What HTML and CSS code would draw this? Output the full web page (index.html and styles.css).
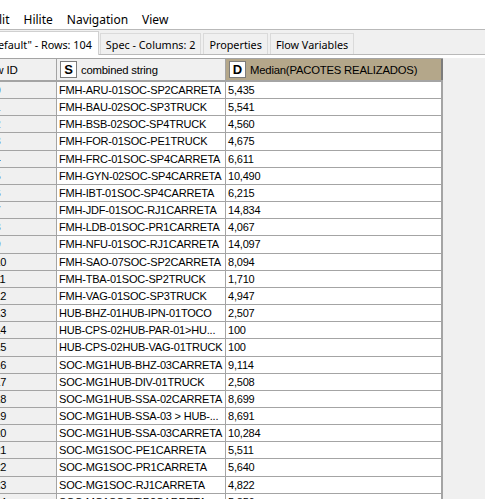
FILE: index.html
```html
<!DOCTYPE html>
<html>
<head>
<meta charset="utf-8">
<link rel="stylesheet" href="styles.css">
</head>
<body>
<div class="menubar">
  <span class="menu menu-cut">lit</span>
  <span class="menu">Hilite</span>
  <span class="menu">Navigation</span>
  <span class="menu">View</span>
</div>
<div class="tabstrip">
  <div class="tab active">efault" - Rows: 104</div>
  <div class="tab">Spec - Columns: 2</div>
  <div class="tab">Properties</div>
  <div class="tab">Flow Variables</div>
</div>
<div class="gap"></div>
<div class="tablearea">
  <div class="table">
    <div class="row head">
      <div class="cell id">Row ID</div>
      <div class="cell str"><span class="type">S</span>combined string</div>
      <div class="cell num sel"><span class="type">D</span>Median(PACOTES REALIZADOS)</div>
    </div>
    <div class="row"><div class="cell id">Row0</div><div class="cell str">FMH-ARU-01SOC-SP2CARRETA</div><div class="cell num">5,435</div></div>
    <div class="row"><div class="cell id">Row1</div><div class="cell str">FMH-BAU-02SOC-SP3TRUCK</div><div class="cell num">5,541</div></div>
    <div class="row"><div class="cell id">Row2</div><div class="cell str">FMH-BSB-02SOC-SP4TRUCK</div><div class="cell num">4,560</div></div>
    <div class="row"><div class="cell id">Row3</div><div class="cell str">FMH-FOR-01SOC-PE1TRUCK</div><div class="cell num">4,675</div></div>
    <div class="row"><div class="cell id">Row4</div><div class="cell str">FMH-FRC-01SOC-SP4CARRETA</div><div class="cell num">6,611</div></div>
    <div class="row"><div class="cell id">Row5</div><div class="cell str">FMH-GYN-02SOC-SP4CARRETA</div><div class="cell num">10,490</div></div>
    <div class="row"><div class="cell id">Row6</div><div class="cell str">FMH-IBT-01SOC-SP4CARRETA</div><div class="cell num">6,215</div></div>
    <div class="row"><div class="cell id">Row7</div><div class="cell str">FMH-JDF-01SOC-RJ1CARRETA</div><div class="cell num">14,834</div></div>
    <div class="row"><div class="cell id">Row8</div><div class="cell str">FMH-LDB-01SOC-PR1CARRETA</div><div class="cell num">4,067</div></div>
    <div class="row"><div class="cell id">Row9</div><div class="cell str">FMH-NFU-01SOC-RJ1CARRETA</div><div class="cell num">14,097</div></div>
    <div class="row"><div class="cell id">Row10</div><div class="cell str">FMH-SAO-07SOC-SP2CARRETA</div><div class="cell num">8,094</div></div>
    <div class="row"><div class="cell id">Row11</div><div class="cell str">FMH-TBA-01SOC-SP2TRUCK</div><div class="cell num">1,710</div></div>
    <div class="row"><div class="cell id">Row12</div><div class="cell str">FMH-VAG-01SOC-SP3TRUCK</div><div class="cell num">4,947</div></div>
    <div class="row"><div class="cell id">Row13</div><div class="cell str">HUB-BHZ-01HUB-IPN-01TOCO</div><div class="cell num">2,507</div></div>
    <div class="row"><div class="cell id">Row14</div><div class="cell str">HUB-CPS-02HUB-PAR-01&gt;HU...</div><div class="cell num">100</div></div>
    <div class="row"><div class="cell id">Row15</div><div class="cell str">HUB-CPS-02HUB-VAG-01TRUCK</div><div class="cell num">100</div></div>
    <div class="row"><div class="cell id">Row16</div><div class="cell str">SOC-MG1HUB-BHZ-03CARRETA</div><div class="cell num">9,114</div></div>
    <div class="row"><div class="cell id">Row17</div><div class="cell str">SOC-MG1HUB-DIV-01TRUCK</div><div class="cell num">2,508</div></div>
    <div class="row"><div class="cell id">Row18</div><div class="cell str">SOC-MG1HUB-SSA-02CARRETA</div><div class="cell num">8,699</div></div>
    <div class="row"><div class="cell id">Row19</div><div class="cell str">SOC-MG1HUB-SSA-03 &gt; HUB-...</div><div class="cell num">8,691</div></div>
    <div class="row"><div class="cell id">Row20</div><div class="cell str">SOC-MG1HUB-SSA-03CARRETA</div><div class="cell num">10,284</div></div>
    <div class="row"><div class="cell id">Row21</div><div class="cell str">SOC-MG1SOC-PE1CARRETA</div><div class="cell num">5,511</div></div>
    <div class="row"><div class="cell id">Row22</div><div class="cell str">SOC-MG1SOC-PR1CARRETA</div><div class="cell num">5,640</div></div>
    <div class="row"><div class="cell id">Row23</div><div class="cell str">SOC-MG1SOC-RJ1CARRETA</div><div class="cell num">4,822</div></div>
    <div class="row"><div class="cell id">Row24</div><div class="cell str">SOC-MG1SOC-SP2CARRETA</div><div class="cell num">5,856</div></div>
  </div>
  <div class="filler"></div>
</div>
</body>
</html>
```
FILE: styles.css
```css
html, body {
  margin: 0;
  padding: 0;
  background: #ffffff;
  overflow: hidden;
  height: 499px;
}
body {
  font-family: "Liberation Sans", Arial, sans-serif;
  color: #000;
}
.menubar {
  height: 30px;
  display: flex;
  align-items: center;
  font-family: "Noto Sans", sans-serif;
  font-size: 12px;
  border-bottom: 1px solid #b9b9b9;
  box-sizing: border-box;
  padding-top: 9px;
}
.menu {
  margin-left: 14px;
}
.menu-cut {
  margin-left: -1px;
}
.tabstrip {
  display: flex;
  height: 25px;
  background: #f0f0f0;
  border-bottom: 1px solid #b9b9b9;
  box-sizing: border-box;
  align-items: flex-end;
  font-family: "Noto Sans", sans-serif;
  font-size: 10.8px;
}
.tab {
  height: 21px;
  line-height: 21px;
  padding: 0 5px;
  box-sizing: border-box;
  border: 1px solid #dadada;
  border-bottom: none;
  margin-right: 2px;
  background: #f0f0f0;
}
.tab.active {
  height: 24px;
  line-height: 25px;
  background: #ffffff;
  border-color: #d0d0d0;
  margin-left: -8px;
  padding-left: 5px;
  padding-right: 6px;
  margin-right: 1px;
  position: relative;
  top: 1px;
}
.gap {
  height: 3px;
}
.tablearea {
  display: flex;
  height: 441px;
}
.table {
  margin-left: -30px;
  font-size: 11px;
  letter-spacing: -0.2px;
}
.row {
  display: flex;
  height: 17.17px;
  box-sizing: border-box;
  border-bottom: 1px solid #a4a4a4;
}
.cell {
  box-sizing: border-box;
  padding-left: 2px;
  line-height: 16px;
  white-space: nowrap;
  overflow: hidden;
  border-right: 1px solid #a4a4a4;
}
.cell.id {
  width: 87px;
  background: #f0f0f0;
  padding-left: 3px;
}
.cell.str {
  width: 169px;
}
.cell.num {
  width: 217px;
  border-right: 2px solid #a4a4a4;
}
.row.head {
  height: 24px;
  border-top: 1px solid #a4a4a4;
  border-bottom: 2px solid #a4a4a4;
  background: #f0f0f0;
}
.row.head .cell {
  line-height: 20px;
  display: flex;
  align-items: center;
  font-size: 11.3px;
}
.row.head .cell.id {
  padding-left: 11px;
  font-size: 11.5px;
}
.row.head .cell.sel {
  background: #b4a78a;
  border-right: 2px solid #7c7c7c;
}
.type {
  display: inline-flex;
  width: 17px;
  height: 17px;
  box-sizing: border-box;
  border: 1px solid #7c7c7c;
  background: #fff;
  align-items: center;
  justify-content: center;
  font-weight: bold;
  font-size: 13px;
  letter-spacing: 0;
  margin-right: 4px;
  margin-left: 1px;
}
.filler {
  flex: 1;
  background: #f0f0f0;
}
```
